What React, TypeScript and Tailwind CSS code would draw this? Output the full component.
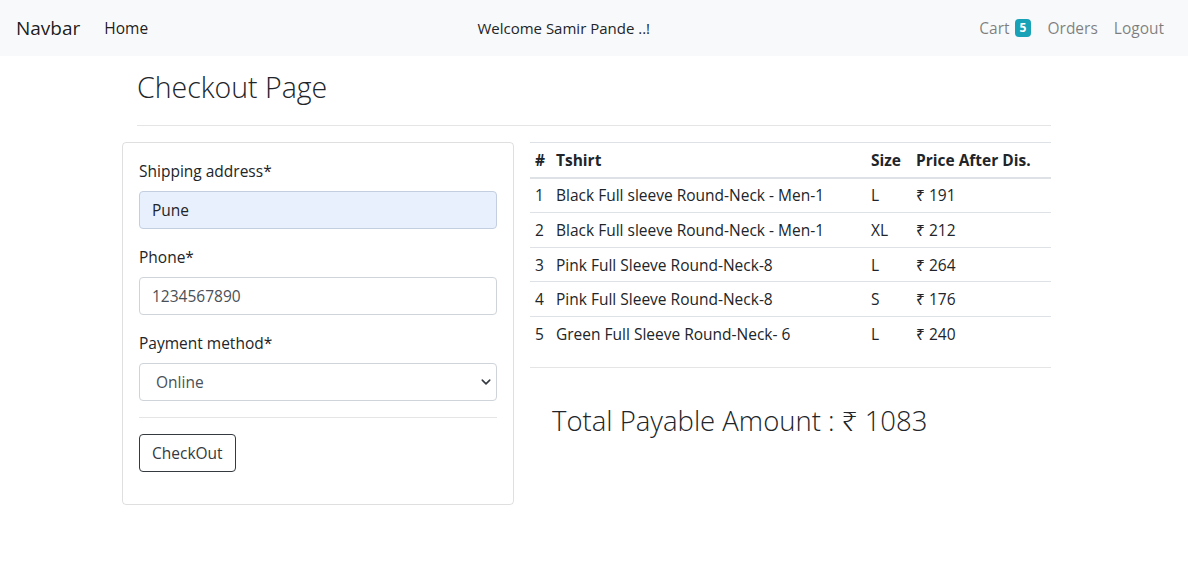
import React from "react";

const items = [
  { name: "Black Full sleeve Round-Neck - Men-1", size: "L", price: 191 },
  { name: "Black Full sleeve Round-Neck - Men-1", size: "XL", price: 212 },
  { name: "Pink Full Sleeve Round-Neck-8", size: "L", price: 264 },
  { name: "Pink Full Sleeve Round-Neck-8", size: "S", price: 176 },
  { name: "Green Full Sleeve Round-Neck- 6", size: "L", price: 240 },
];

function Navbar() {
  return (
    <nav className="h-14 bg-[#f8f9fa] flex items-center px-4">
      <span className="text-[19px] leading-[30px] text-[rgba(0,0,0,0.9)] mr-4">Navbar</span>
      <a className="px-2 text-[rgba(0,0,0,0.9)]">Home</a>
      <span className="mx-auto text-[#212529] text-[15px]">Welcome Samir Pande ..!</span>
      <div className="flex items-center">
        <a className="px-2 text-[rgba(0,0,0,0.5)] flex items-center">
          Cart
          <span className="ml-[5px] bg-[#17a2b8] text-white text-[12px] font-bold leading-none px-[5px] pt-[3px] pb-[3px] rounded-[4px]">
            5
          </span>
        </a>
        <a className="px-2 text-[rgba(0,0,0,0.5)]">Orders</a>
        <a className="px-2 text-[rgba(0,0,0,0.5)]">Logout</a>
      </div>
    </nav>
  );
}

function CheckoutForm() {
  return (
    <div className="w-[392px] shrink-0 border border-[rgba(0,0,0,0.125)] rounded-[4px] px-4 pt-4 pb-4">
      <div className="mb-4">
        <label className="block mb-2">Shipping address*</label>
        <input
          defaultValue="Pune"
          className="w-full h-[38px] px-3 rounded-[4px] border border-[#c3cfe0] bg-[#e8f0fe] text-[#212529] outline-none"
        />
      </div>
      <div className="mb-4">
        <label className="block mb-2">Phone*</label>
        <input
          defaultValue="1234567890"
          className="w-full h-[38px] px-3 rounded-[4px] border border-[#ced4da] text-[#495057] outline-none"
        />
      </div>
      <div>
        <label className="block mb-2">Payment method*</label>
        <div className="relative">
          <select className="appearance-none w-full h-[38px] pl-4 pr-8 rounded-[4px] border border-[#ced4da] bg-white text-[#495057] outline-none">
            <option>Online</option>
            <option>Cash on delivery</option>
          </select>
          <svg
            className="absolute right-[6px] top-[14px] pointer-events-none"
            width="10"
            height="10"
            viewBox="0 0 16 16"
          >
            <path d="M2 5l6 6 6-6" fill="none" stroke="#343a40" strokeWidth="2.5" strokeLinecap="round" strokeLinejoin="round" />
          </svg>
        </div>
      </div>
      <hr className="my-4 border-t border-[rgba(0,0,0,0.1)]" />
      <button className="h-[38px] px-3 mb-4 border border-[#343a40] rounded-[4px] text-[#343a40]">CheckOut</button>
    </div>
  );
}

function OrderTable() {
  const total = items.reduce((s, i) => s + i.price, 0);
  return (
    <div className="flex-1">
      <table className="w-full border-collapse text-left">
        <thead>
          <tr className="border-t border-[#dee2e6] border-b-2">
            <th className="w-[21px] px-[5px] py-[4.8px] font-bold">#</th>
            <th className="w-[315px] px-[5px] py-[4.8px] font-bold">Tshirt</th>
            <th className="w-[45px] px-[5px] py-[4.8px] font-bold">Size</th>
            <th className="px-[5px] py-[4.8px] font-bold">Price After Dis.</th>
          </tr>
        </thead>
        <tbody>
          {items.map((it, i) => (
            <tr key={i} className={i > 0 ? "border-t border-[#dee2e6]" : ""}>
              <td className="px-[5px] py-[4.8px]">{i + 1}</td>
              <td className="px-[5px] py-[4.8px]">{it.name}</td>
              <td className="px-[5px] py-[4.8px]">{it.size}</td>
              <td className="px-[5px] py-[4.8px]">₹ {it.price}</td>
            </tr>
          ))}
        </tbody>
      </table>
      <hr className="mt-4 border-t border-[rgba(0,0,0,0.1)]" />
      <h2 className="mt-[35px] ml-[22px] text-[27.5px] font-light leading-[36px]">Total Payable Amount : ₹ {total}</h2>
    </div>
  );
}

export default function App() {
  return (
    <div className="min-h-screen bg-white text-[#212529] text-[15.5px] leading-6 font-['Open_Sans','Noto_Sans',sans-serif]">
      <Navbar />
      <div className="w-[929px] ml-[122px]">
        <div className="ml-[15px]">
          <h1 className="pt-3 text-[28.5px] font-light leading-[38px]">Checkout Page</h1>
          <hr className="mt-[19px] mb-4 border-t border-[rgba(0,0,0,0.1)]" />
        </div>
        <div className="flex gap-4 items-start">
          <CheckoutForm />
          <OrderTable />
        </div>
      </div>
    </div>
  );
}
